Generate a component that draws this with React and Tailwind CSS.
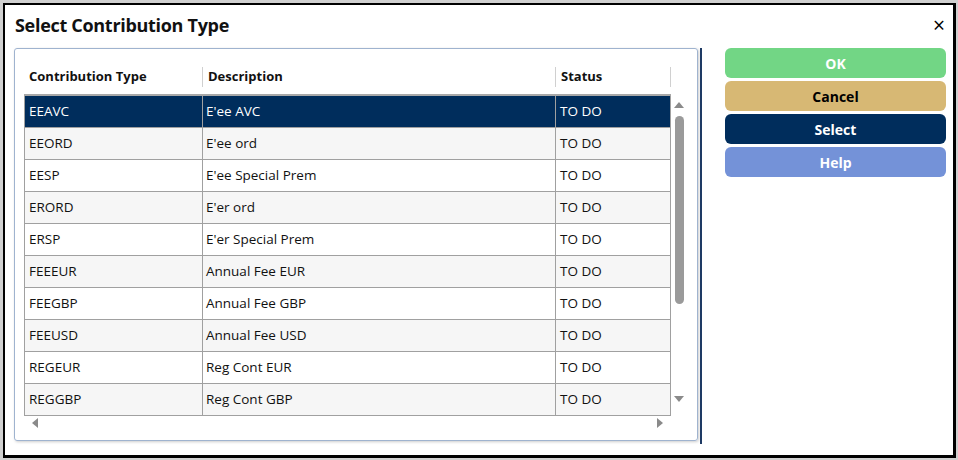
import React from "react";

const rows = [
  ["EEAVC", "E'ee AVC", "TO DO"],
  ["EEORD", "E'ee ord", "TO DO"],
  ["EESP", "E'ee Special Prem", "TO DO"],
  ["ERORD", "E'er ord", "TO DO"],
  ["ERSP", "E'er Special Prem", "TO DO"],
  ["FEEEUR", "Annual Fee EUR", "TO DO"],
  ["FEEGBP", "Annual Fee GBP", "TO DO"],
  ["FEEUSD", "Annual Fee USD", "TO DO"],
  ["REGEUR", "Reg Cont EUR", "TO DO"],
  ["REGGBP", "Reg Cont GBP", "TO DO"],
];

const buttons = [
  { label: "OK", cls: "bg-[#72d685] text-white" },
  { label: "Cancel", cls: "bg-[#d7b874] text-black" },
  { label: "Select", cls: "bg-[#002d5c] text-white" },
  { label: "Help", cls: "bg-[#7492d8] text-white" },
];

const App = () => {
  return (
    <div className="w-[958px] h-[460px] bg-[#d0d0d0] pl-[3px] pt-[3px] pr-[2px] pb-[2px] font-['Open_Sans',sans-serif]">
      <div className="h-full w-full bg-white border-2 border-black border-b-[3px] border-r-[3px] flex flex-col">
        {/* title bar */}
        <div className="flex items-center justify-between h-[43px] pl-[10px] pr-[8px] pb-[3px]">
          <h1 className="text-[18px] font-bold text-[#111] tracking-[-0.3px]">Select Contribution Type</h1>
          <span className="text-[21px] leading-none text-black">×</span>
        </div>

        <div className="flex flex-1 pl-[9px]">
          {/* table panel */}
          <div className="w-[684px] h-[393px] border border-[#9fb3cf] rounded-[3px] shadow-[1px_1px_3px_rgba(0,0,0,0.2)] pl-[9px] pt-[11px] flex flex-col">
            <div className="flex">
              <div className="w-[647px]">
                {/* header */}
                <div className="flex h-[36px] border-b-2 border-[#a8a8a8] text-[13px] font-bold text-[#111]">
                  <div className="w-[178px] flex items-center pl-[5px]">Contribution Type</div>
                  <div className="w-[353px] flex items-center pl-[5px] border-l border-[#d0d0d0] my-[7px]">Description</div>
                  <div className="w-[116px] flex items-center pl-[5px] border-l border-r border-[#d0d0d0] my-[7px]">Status</div>
                </div>
                {rows.map((r, i) => (
                  <div
                    key={r[0]}
                    className={`flex h-[32px] border-b border-l border-r border-[#a0a0a0] text-[13.5px] ${
                      i === 0
                        ? "bg-[#002d5c] text-white"
                        : i % 2 === 1
                        ? "bg-[#f6f6f6] text-[#111]"
                        : "bg-white text-[#111]"
                    }`}
                  >
                    <div className="w-[177px] flex items-center pl-[4px]">{r[0]}</div>
                    <div className="w-[353px] flex items-center pl-[3px] border-l border-[#a0a0a0]">{r[1]}</div>
                    <div className="w-[115px] flex items-center pl-[4px] border-l border-[#a0a0a0]">{r[2]}</div>
                  </div>
                ))}
              </div>
              {/* vertical scrollbar */}
              <div className="w-[16px] flex flex-col items-center pt-[42px]">
                <div className="w-0 h-0 border-l-[5px] border-r-[5px] border-b-[6px] border-l-transparent border-r-transparent border-b-[#8a8a8a]" />
                <div className="w-[9px] h-[188px] mt-[8px] rounded-full bg-[#9a9a9a]" />
                <div className="mt-[92px] w-0 h-0 border-l-[5px] border-r-[5px] border-t-[6px] border-l-transparent border-r-transparent border-t-[#8a8a8a]" />
              </div>
            </div>
            {/* horizontal scrollbar */}
            <div className="w-[647px] flex items-center justify-between px-[8px] h-[14px]">
              <div className="w-0 h-0 border-t-[5px] border-b-[5px] border-r-[6px] border-t-transparent border-b-transparent border-r-[#8a8a8a]" />
              <div className="w-0 h-0 border-t-[5px] border-b-[5px] border-l-[6px] border-t-transparent border-b-transparent border-l-[#8a8a8a]" />
            </div>
          </div>

          {/* separator */}
          <div className="ml-[2px] w-[2px] h-[396px] bg-[#1e3a64]" />

          {/* buttons */}
          <div className="ml-[23px] w-[221px] flex flex-col gap-[3px]">
            {buttons.map((b) => (
              <button
                key={b.label}
                className={`h-[30px] rounded-[6px] text-[14px] font-bold ${b.cls}`}
              >
                {b.label}
              </button>
            ))}
          </div>
        </div>
      </div>
    </div>
  );
};

export default App;
